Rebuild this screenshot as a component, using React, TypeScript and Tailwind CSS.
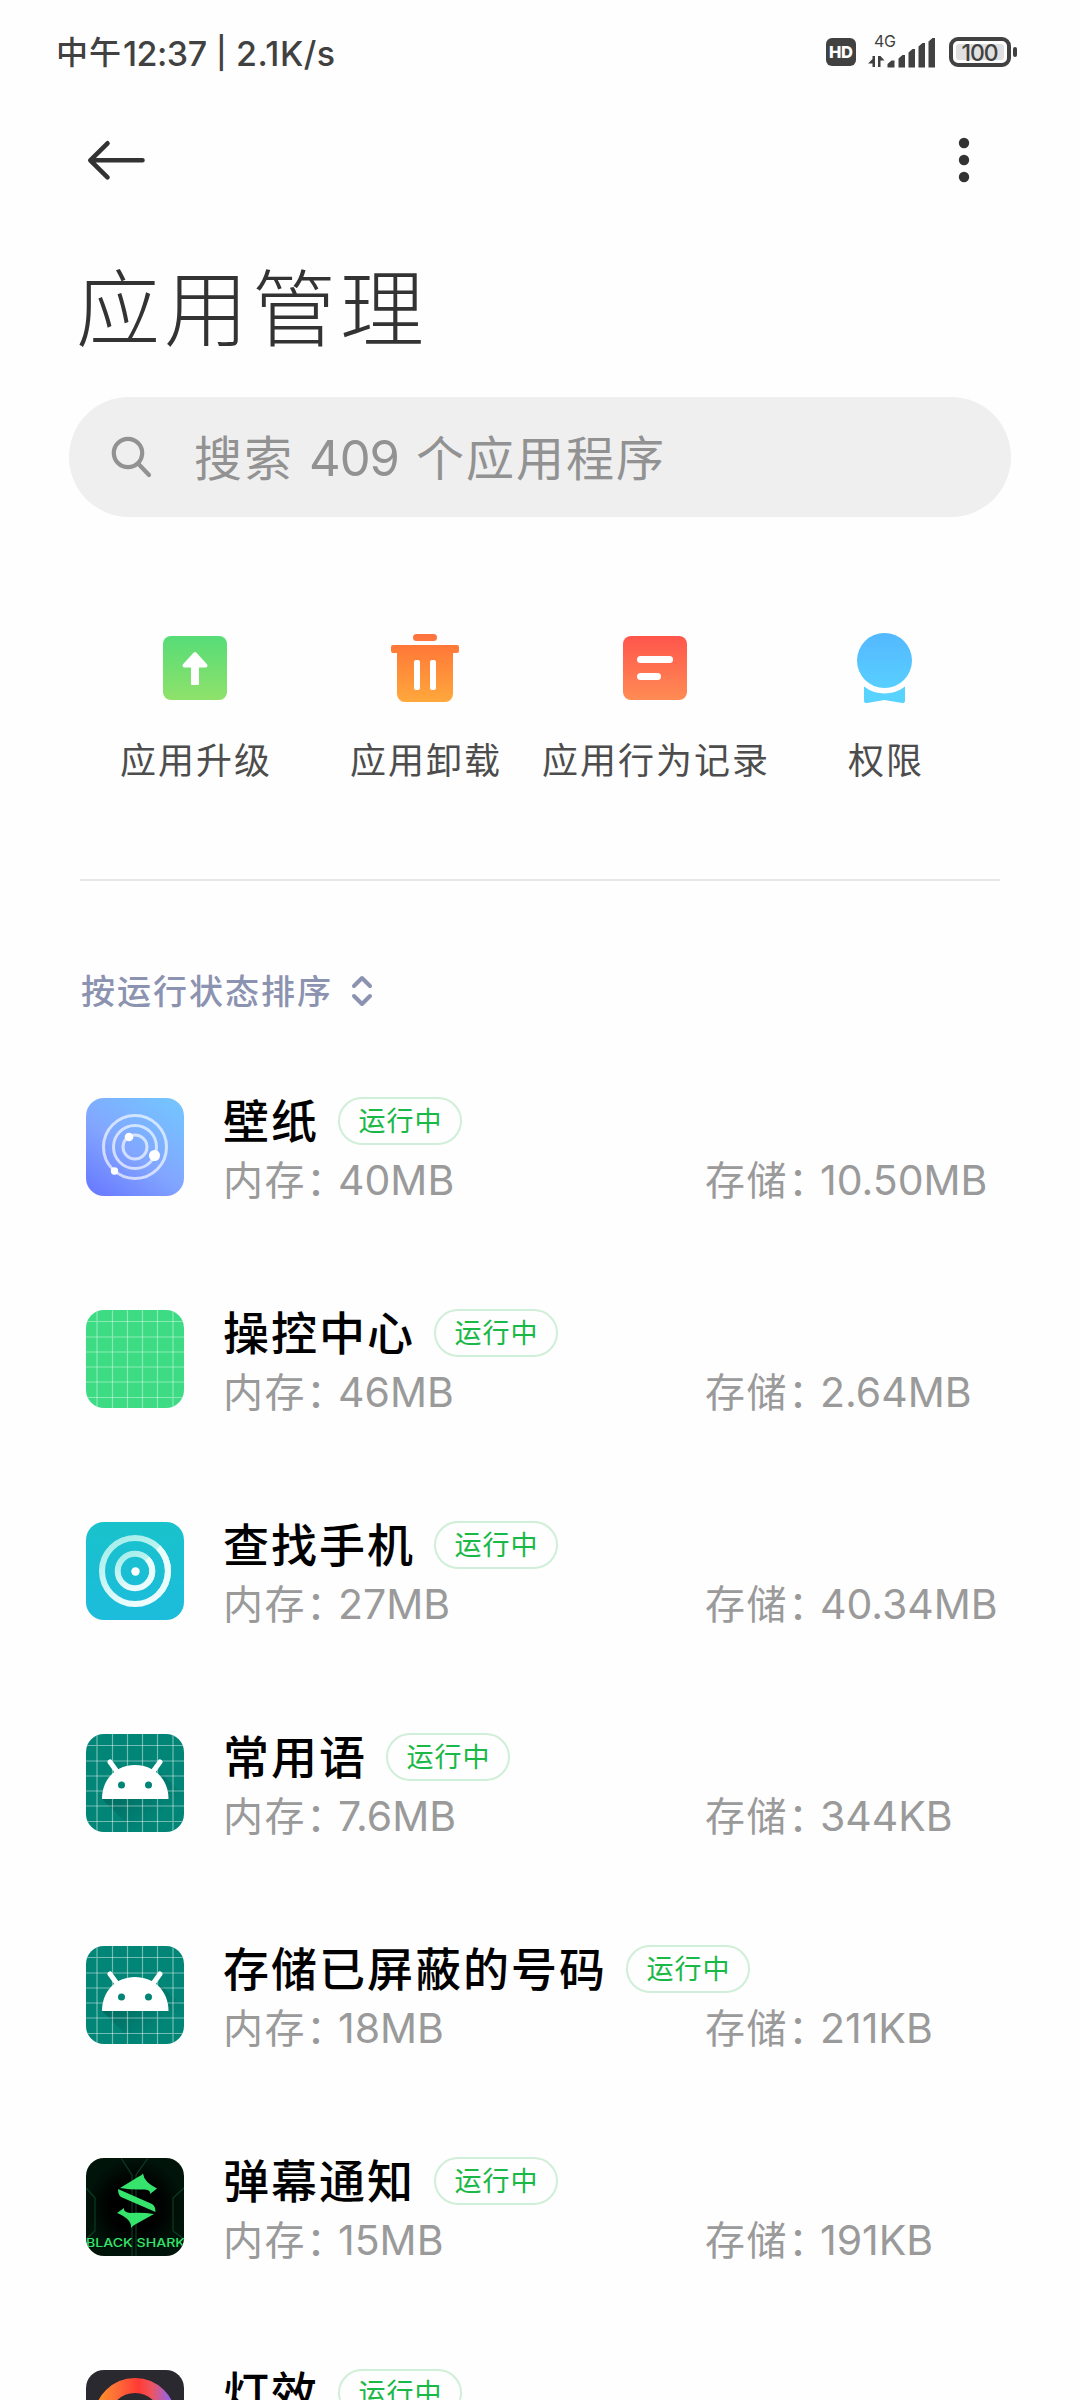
import type { ReactNode } from "react";

const stops = (id: string, from: string, to: string) => (
  <linearGradient id={id} x1="0" y1="0" x2="0" y2="1">
    <stop offset="0" stopColor={from} />
    <stop offset="1" stopColor={to} />
  </linearGradient>
);

function StatusIcons() {
  return (
    <svg width="196" height="40" viewBox="824 32 196 40" fill="#414141" fontFamily="Inter, sans-serif">
      <rect x="826" y="38" width="30" height="28" rx="6" />
      <text x="829" y="58" fontSize="16.5" fontWeight="800" fill="#fff" textLength="24">HD</text>
      <text x="874" y="47" fontSize="16" fontWeight="400" textLength="22">4G</text>
      {/* 上下行箭头 */}
      <path d="M872.500 56H875V67H872.500V63.500H868L872.500 59ZM878 56H880.500L884.500 60.500H880.500V67H878Z" />
      {/* 信号格 */}
      <path d="M887.500 64l4-3.500h3v7h-7zM898.500 58.500l4-3.500h2.500v12.500h-6.500zM908.500 52.500l4-3.500h2.500v18.500h-6.500zM918.500 46.500l4-3.500h2.500v24.500h-6.500zM928.500 41.500l4-3.500h2.500v29.500h-6.500z" />
      <rect x="951" y="39" width="58" height="26" rx="7" fill="none" stroke="#414141" strokeWidth="4" />
      <rect x="956" y="44" width="48" height="16" rx="3" fill="#e0e0e0" />
      <rect x="1013" y="47" width="4" height="10" rx="2" />
      <text x="961.500" y="61" fontSize="23" fontWeight="500" textLength="37">100</text>
    </svg>
  );
}

function StatusBar() {
  return (
    <div className="flex h-[104px] items-center justify-between pr-[60px] pl-[56px] text-[#414141]">
      <div className="flex items-center pt-[2px] text-[34px] font-medium whitespace-pre">
        <span className="w-[67px] text-[32px] tracking-[1px]">中午</span>
        <span className="w-[93px] tracking-[-0.500px]">12:37</span>
        <span className="w-[20px] text-[31px]">|</span>
        <span className="tracking-[0.500px]">2.1K/s</span>
      </div>
      <StatusIcons />
    </div>
  );
}

function Header() {
  return (
    <div className="flex h-28 items-center justify-between pr-[106px] pl-[86px]">
      <svg width="60" height="44" viewBox="0 0 60 44" fill="none" stroke="#333" strokeWidth="4.600" strokeLinecap="round" strokeLinejoin="round">
        <path d="M56.500 22.300H4.500M21.500 5.300L4.300 22.300L21.500 39.300" />
      </svg>
      <svg width="20" height="48" viewBox="0 0 20 48" fill="#333">
        <circle cx="10" cy="7" r="5.200" />
        <circle cx="10" cy="24" r="5.200" />
        <circle cx="10" cy="41" r="5.200" />
      </svg>
    </div>
  );
}

function SearchBar() {
  return (
    <div className="mx-[69px] flex h-[120px] items-center rounded-full bg-[#efefef] pl-[42px] text-[48px] whitespace-nowrap text-[#929292]">
      <svg width="42" height="44" viewBox="0 0 42 44" fill="none" stroke="#929292" strokeWidth="4.200" strokeLinecap="round">
        <circle cx="17" cy="18" r="14.200" />
        <path d="M27.500 29L38 40" />
      </svg>
      <span className="ml-[41px] w-[115px] pt-[3px] tracking-[2px]">搜索</span>
      <span className="w-[107px] pt-[3px] text-[49px] tracking-[-1px]">409</span>
      <span className="pt-[3px] tracking-[2px]">个应用程序</span>
    </div>
  );
}

function UpgradeIcon() {
  return (
    <svg width="72" height="72" viewBox="0 0 72 72">
      <defs>{stops("upgrade", "#56dc77", "#8fe26a")}</defs>
      <rect x="4" y="4" width="64" height="64" rx="8" fill="url(#upgrade)" />
      <path d="M36 22L46.500 33.500H25.500Z" fill="#fff" stroke="#fff" strokeWidth="4" strokeLinejoin="round" />
      <rect x="32" y="33" width="8" height="20" rx="1" fill="#fff" />
    </svg>
  );
}

function TrashIcon() {
  return (
    <svg width="72" height="72" viewBox="0 0 72 72">
      <defs>
        <linearGradient id="trash" gradientUnits="userSpaceOnUse" x1="0" y1="2" x2="0" y2="70">
          <stop offset="0" stopColor="#fd7240" />
          <stop offset="0.200" stopColor="#ff7a38" />
          <stop offset="1" stopColor="#ffa83c" />
        </linearGradient>
      </defs>
      <g fill="url(#trash)">
        <rect x="24" y="2" width="24" height="7" rx="3.500" />
        <path d="M4 13h64a2 2 0 0 1 2 2v4a2 2 0 0 1-2 2H64v41a8 8 0 0 1-8 8H16a8 8 0 0 1-8-8V21H4a2 2 0 0 1-2-2v-4a2 2 0 0 1 2-2z" />
      </g>
      <rect x="25" y="28" width="6" height="30" rx="2" fill="#fff" />
      <rect x="41" y="28" width="6" height="30" rx="2" fill="#fff" />
    </svg>
  );
}

function RecordIcon() {
  return (
    <svg width="72" height="72" viewBox="0 0 72 72">
      <defs>{stops("record", "#ff554c", "#ff8c54")}</defs>
      <rect x="4" y="4" width="64" height="64" rx="8" fill="url(#record)" />
      <rect x="18" y="24" width="36" height="7" rx="3.500" fill="#fff" />
      <rect x="18" y="41" width="24" height="7" rx="3.500" fill="#fff" />
    </svg>
  );
}

function PermissionIcon() {
  return (
    <svg width="72" height="72" viewBox="0 0 72 72">
      <defs>{stops("permission", "#53b8ff", "#58cfff")}</defs>
      <circle cx="35.500" cy="28.500" r="27.500" fill="url(#permission)" />
      <path d="M15 54.500Q24 61.500 35.500 61.500T56 54.500V69Q56 71.500 53 71L35.500 68L18 71Q15 71.500 15 69Z" fill="#58d2ff" />
    </svg>
  );
}

const actions = [
  { label: "应用升级", icon: <UpgradeIcon /> },
  { label: "应用卸载", icon: <TrashIcon /> },
  { label: "应用行为记录", icon: <RecordIcon /> },
  { label: "权限", icon: <PermissionIcon /> },
];

function Grid({ color, opacity }: { color: string; opacity: number }) {
  return (
    <g stroke={color} strokeOpacity={opacity} strokeWidth="1.200">
      {[11, 26.500, 41.500, 56.500, 71.500, 87].map((p) => (
        <path key={p} d={`M${p} 0V98M0 ${p + 0.5}H98`} />
      ))}
    </g>
  );
}

function WallpaperIcon() {
  return (
    <svg width="98" height="98" viewBox="0 0 98 98">
      <defs>
        <linearGradient id="wall" x1="0.850" y1="0" x2="0.150" y2="1">
          <stop offset="0" stopColor="#74c4ff" />
          <stop offset="0.550" stopColor="#82a6ff" />
          <stop offset="1" stopColor="#6a7cff" />
        </linearGradient>
      </defs>
      <rect width="98" height="98" fill="url(#wall)" />
      <g fill="none" stroke="#fff" strokeOpacity="0.650" strokeWidth="3">
        <circle cx="49" cy="49" r="31.500" />
        <circle cx="49" cy="49" r="21.500" />
        <circle cx="49" cy="49" r="12" />
      </g>
      <g fill="#fff">
        <circle cx="43" cy="39" r="4.300" />
        <circle cx="68.500" cy="57.500" r="5.500" />
        <circle cx="28.500" cy="73" r="3.700" />
      </g>
    </svg>
  );
}

function ControlIcon() {
  return (
    <svg width="98" height="98" viewBox="0 0 98 98">
      <rect width="98" height="98" fill="#3ddc84" />
      <Grid color="#fff" opacity={0.4} />
    </svg>
  );
}

function FindPhoneIcon() {
  return (
    <svg width="98" height="98" viewBox="0 0 98 98">
      <defs>
        {stops("find", "#19c2cb", "#1cbcdc")}
        <linearGradient id="ring" x1="0.200" y1="0" x2="0.600" y2="1">
          <stop offset="0" stopColor="#a4eeea" />
          <stop offset="1" stopColor="#effcff" />
        </linearGradient>
      </defs>
      <rect width="98" height="98" fill="url(#find)" />
      <g fill="none" stroke="url(#ring)" strokeWidth="6">
        <circle cx="49" cy="49" r="33" />
        <circle cx="49" cy="49" r="17.300" />
      </g>
      <g fill="none" stroke="#e9fdfd" strokeWidth="6">
        <path d="M72.300 25.700A33 33 0 0 1 72.300 72.300" />
        <path d="M61.200 36.800A17.300 17.300 0 0 1 61.200 61.200" />
      </g>
      <circle cx="49.500" cy="49.500" r="4.200" fill="#fff" />
    </svg>
  );
}

function AndroidIcon() {
  return (
    <svg width="98" height="98" viewBox="0 0 98 98">
      <defs>
        <linearGradient id="droidShadow" x1="0" y1="0" x2="1" y2="1">
          <stop offset="0.200" stopColor="#000" stopOpacity="0.200" />
          <stop offset="0.700" stopColor="#000" stopOpacity="0" />
        </linearGradient>
      </defs>
      <rect width="98" height="98" fill="#008577" />
      <path d="M16 65L49 98H98V62L76 40Z" fill="url(#droidShadow)" />
      <Grid color="#fff" opacity={0.45} />
      <path d="M24 28L32 39M74 28L66 39" stroke="#fff" strokeWidth="5" strokeLinecap="round" />
      <path d="M16 65C16 45 30 31 49 31S82.500 45 82.500 65Z" fill="#fff" />
      <circle cx="35.500" cy="51" r="3.500" fill="#008577" />
      <circle cx="62.500" cy="51" r="3.500" fill="#008577" />
    </svg>
  );
}

function SharkIcon() {
  return (
    <svg width="98" height="98" viewBox="0 0 98 98">
      <defs>
        <radialGradient id="shark">
          <stop offset="0.500" stopColor="#000" />
          <stop offset="1" stopColor="#00140a" />
        </radialGradient>
      </defs>
      <rect width="98" height="98" fill="url(#shark)" />
      <path d="M35 0L46 17V98M62 0L50 17V98M0 30L9 40V73L0 81M98 30L87 40V73L98 81" fill="none" stroke="#0b3d24" strokeWidth="1.200" />
      <g fill="#36e36c">
        <path d="M34 30L52 19Q56 17 57 15.500Q58 24 71 30.500L64 36Q65 32 59 31.500Q46 32 34 30Z" />
        <path d="M32 31L66 46Q69.500 48 69.500 54L35 39Q32 37 32 31Z" />
        <path d="M31 55L38 50Q37 54 44 55Q56 54 68 56L50 66Q46 68 45 70Q46 61 31 55Z" />
      </g>
      <text x="0" y="89" fontSize="11.500" fontWeight="500" fill="#36e36c" textLength="99" lengthAdjust="spacingAndGlyphs" fontFamily="Inter, sans-serif">
        BLACK SHARK
      </text>
    </svg>
  );
}

function LightIcon() {
  return (
    <svg width="98" height="98" viewBox="0 0 98 98">
      <defs>
        <linearGradient id="light" x1="0" y1="0.300" x2="1" y2="0.300">
          <stop offset="0" stopColor="#ff8a2c" />
          <stop offset="0.250" stopColor="#ff6a38" />
          <stop offset="0.550" stopColor="#ff3a34" />
          <stop offset="0.750" stopColor="#ee5560" />
          <stop offset="1" stopColor="#9a62e0" />
        </linearGradient>
      </defs>
      <rect width="98" height="98" fill="#2a292f" />
      <circle cx="49" cy="49" r="33.500" fill="none" stroke="url(#light)" strokeWidth="15" />
    </svg>
  );
}

type AppItem = {
  name: string;
  memory: string;
  storage: string;
  icon: ReactNode;
};

const apps: AppItem[] = [
  { name: "壁纸", memory: "40MB", storage: "10.50MB", icon: <WallpaperIcon /> },
  { name: "操控中心", memory: "46MB", storage: "2.64MB", icon: <ControlIcon /> },
  { name: "查找手机", memory: "27MB", storage: "40.34MB", icon: <FindPhoneIcon /> },
  { name: "常用语", memory: "7.6MB", storage: "344KB", icon: <AndroidIcon /> },
  { name: "存储已屏蔽的号码", memory: "18MB", storage: "211KB", icon: <AndroidIcon /> },
  { name: "弹幕通知", memory: "15MB", storage: "191KB", icon: <SharkIcon /> },
  { name: "灯效", memory: "", storage: "", icon: <LightIcon /> },
];

function AppRow({ app }: { app: AppItem }) {
  return (
    <div className="flex h-[212px] items-start pl-[86px]">
      <div className="mt-[2px] h-[98px] w-[98px] shrink-0 overflow-hidden rounded-[18px]">{app.icon}</div>
      <div className="ml-[39px] flex-1 whitespace-nowrap">
        <div className="flex h-[50px] items-center">
          <span className="text-[46px] leading-[50px] font-medium tracking-[2px] text-black">{app.name}</span>
          <span className="ml-[19px] flex h-12 w-[124px] items-center justify-center rounded-full border-2 border-[#d0efd8] pt-[3px] pl-[1px] text-[27px] tracking-[1px] text-[#1ab846]">
            运行中
          </span>
        </div>
        {app.memory && (
          <div className="mt-[10px] flex h-[50px] items-center text-[40px] text-[#9a9a9a]">
            <span className="w-[115px] shrink-0 tracking-[1.500px]">内存：</span>
            <span className="w-[367px] shrink-0 text-[41px]">{app.memory}</span>
            <span className="w-[115px] shrink-0 tracking-[1.500px]">存储：</span>
            <span className="text-[41px]">{app.storage}</span>
          </div>
        )}
      </div>
    </div>
  );
}

function App() {
  return (
    <div className="h-[2400px] w-[1080px] overflow-hidden bg-[#fefefe] font-['Inter','Noto_Sans_CJK_SC',sans-serif]">
      <StatusBar />
      <Header />
      <h1 className="flex h-[181px] items-center pt-[6px] pl-[76px] text-[84px] font-light tracking-[4px] text-[#333]">应用管理</h1>
      <SearchBar />

      <div className="mx-20 mt-[115px] grid grid-cols-4">
        {actions.map((a) => (
          <div key={a.label} className="flex flex-col items-center">
            {a.icon}
            <span className="mt-[29px] pt-px pl-[2px] text-[36px] leading-[54px] tracking-[2px] whitespace-nowrap text-[#4d4d4d]">{a.label}</span>
          </div>
        ))}
      </div>
      <div className="mx-20 mt-[91px] h-[2px] bg-[#e6e6e6]" />

      <div className="mt-[85px] flex h-[50px] items-center pl-[81px] text-[34px] font-medium tracking-[2px] text-[#8c93b0]">
        按运行状态排序
        <svg className="ml-[17px]" width="24" height="34" viewBox="0 0 24 34" fill="none" stroke="#8c93b0" strokeWidth="4" strokeLinecap="round" strokeLinejoin="round">
          <path d="M4 12L12 4L20 12M4 22L12 30L20 22" />
        </svg>
      </div>

      <div className="mt-20">
        {apps.map((app) => (
          <AppRow key={app.name} app={app} />
        ))}
      </div>
    </div>
  );
}

export default App;
